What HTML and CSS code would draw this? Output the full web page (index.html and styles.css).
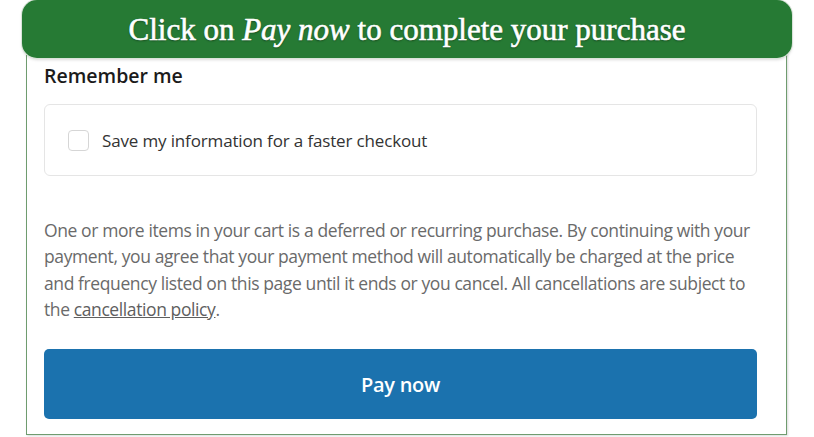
FILE: index.html
```html
<!DOCTYPE html>
<html lang="en">
<head>
<meta charset="utf-8">
<title>Pay now</title>
<link rel="stylesheet" href="styles.css">
</head>
<body>
<div class="stage">
  <div class="banner">Click on <em>Pay now</em> to complete your purchase</div>
  <div class="frame">
    <h2 class="title">Remember me</h2>
    <label class="remember">
      <span class="check"></span>
      <span class="remember-text">Save my information for a faster checkout</span>
    </label>
    <p class="notice">One or more items in your cart is a deferred or recurring purchase. By continuing with your payment, you agree that your payment method will automatically be charged at the price and frequency listed on this page until it ends or you cancel. All cancellations are subject to the <a class="link" href="#">cancellation policy</a>.</p>
    <button class="pay" type="button">Pay now</button>
  </div>
</div>
</body>
</html>
```
FILE: styles.css
```css
* { box-sizing: border-box; }
html, body { margin: 0; padding: 0; background: #ffffff; }
body { width: 814px; height: 437px; overflow: hidden; }

.stage {
  position: relative;
  padding-top: 40px;
}

.banner {
  position: absolute;
  top: 0;
  left: 22px;
  width: 770px;
  height: 58px;
  background: #267a34;
  border-radius: 15px;
  box-shadow: 0 0 0 1px #d9e3d9, 0 2px 3px rgba(0,0,0,0.15);
  color: #ffffff;
  font-family: "Liberation Serif", "DejaVu Serif", serif;
  font-size: 31px;
  line-height: 60px;
  text-align: center;
  -webkit-text-stroke: 0.6px #ffffff;
  text-shadow: 0 1px 2px rgba(0,0,0,0.45);
  z-index: 2;
}
.banner em { font-style: italic; }

.frame {
  margin-left: 26px;
  width: 761px;
  height: 395px;
  border: 1.5px solid #6f9c6f;
  border-top: none;
  box-shadow: 1px 1px 2px rgba(0,0,0,0.15);
  padding: 24px 29px 0 17px;
  font-family: "Open Sans", "Noto Sans", sans-serif;
}

.title {
  margin: 0;
  font-size: 19.5px;
  font-weight: 600;
  color: #1b1b1b;
  line-height: 24px;
}

.remember {
  display: flex;
  align-items: center;
  gap: 13px;
  margin-top: 16px;
  height: 72px;
  padding-left: 23px;
  border: 1px solid #e5e5e5;
  border-radius: 6px;
}
.check {
  width: 21px;
  height: 21px;
  border: 1px solid #d6d6d6;
  border-radius: 4px;
  background: #fff;
}
.remember-text {
  font-size: 17px;
  color: #333333;
  letter-spacing: -0.15px;
}

.notice {
  margin: 41px 0 0;
  font-size: 17.5px;
  line-height: 26.3px;
  color: #6a6a6a;
  letter-spacing: -0.4px;
}
.link { color: #5e5e5e; text-decoration: underline; }

.pay {
  display: block;
  width: 713px;
  height: 70px;
  margin-top: 27px;
  border: none;
  border-radius: 5px;
  background: #1b72ae;
  color: #fff;
  font-family: "Open Sans", "Noto Sans", sans-serif;
  font-size: 20px;
  font-weight: 600;
  letter-spacing: -0.3px;
}
```
